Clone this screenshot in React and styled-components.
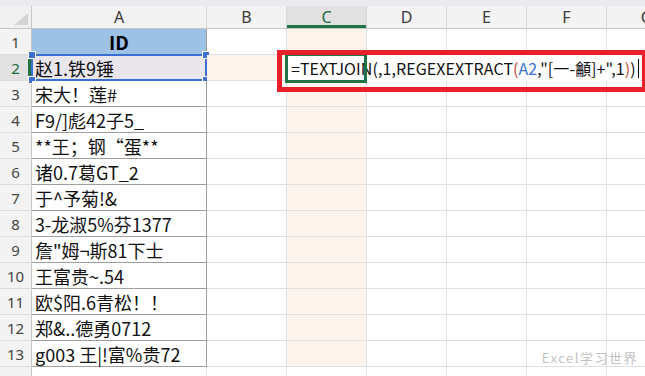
import styled, { createGlobalStyle } from 'styled-components';

const GlobalStyle = createGlobalStyle`
  html, body {
    margin: 0;
    padding: 0;
    background: #ffffff;
  }
  body {
    font-family: "Noto Sans CJK SC", "Noto Sans", sans-serif;
  }
`;

const COLS = [
  { key: 'A', width: 175 },
  { key: 'B', width: 80 },
  { key: 'C', width: 80, active: true },
  { key: 'D', width: 80 },
  { key: 'E', width: 80 },
  { key: 'F', width: 80 },
  { key: 'G', width: 80 },
];

const NAMES = [
  '赵1.铁9锤',
  '宋大！莲#',
  'F9/]彪42子5_',
  '**王；钢“蛋**',
  '诸0.7葛GT_2',
  '于^予菊!&',
  '3-龙淑5%芬1377',
  '詹"姆¬斯81下士',
  '王富贵~.54',
  '欧$阳.6青松！！',
  '郑&..德勇0712',
  'g003 王|!富%贵72',
];

const App = () => {
  const rows = [{ n: 1, header: true }, ...NAMES.map((t, i) => ({ n: i + 2, text: t })), { n: 14, blank: true }];

  return (
    <>
      <GlobalStyle />
      <Sheet>
        <TopBand />
        <HeaderRow>
          <Corner>
            <CornerTriangle />
          </Corner>
          {COLS.map((c) => (
            <ColHead key={c.key} $width={c.width} $active={c.active}>
              {c.key}
            </ColHead>
          ))}
        </HeaderRow>

        {rows.map((r) => (
          <Row key={r.n}>
            <RowHead $active={r.n === 2}>{r.blank ? '' : r.n}</RowHead>
            {COLS.map((c) => {
              if (c.key === 'A') {
                if (r.header) {
                  return (
                    <TitleCell key="A" $width={c.width}>ID</TitleCell>
                  );
                }
                if (r.blank) return <Cell key="A" $width={c.width} />;
                return (
                  <NameCell key="A" $width={c.width} $ref={r.n === 2}>
                    {r.text}
                    {r.n === 2 && (
                      <RefFrame>
                        <Handle $top $left />
                        <Handle $top />
                        <Handle $left />
                        <Handle />
                      </RefFrame>
                    )}
                  </NameCell>
                );
              }
              const tinted = (c.active && !r.blank) || (r.n === 2 && c.key === 'B');
              return (
                <Cell key={c.key} $width={c.width} $tinted={tinted}>
                  {c.active && r.n === 2 && (
                    <>
                      <Editor>
                        <Tok>=TEXTJOIN(,1,REGEXEXTRACT</Tok>
                        <Tok $color="#c0503c">(</Tok>
                        <Tok $color="#3c6fd1">A2</Tok>
                        <Tok>,"[一-龥]+",1</Tok>
                        <Tok $color="#c0503c">)</Tok>
                        <Tok>)</Tok>
                        <Caret />
                      </Editor>
                      <ActiveFrame />
                      <Callout />
                    </>
                  )}
                </Cell>
              );
            })}
          </Row>
        ))}

        <Watermark>Excel学习世界</Watermark>
      </Sheet>
    </>
  );
};

const Sheet = styled.div`
  position: relative;
  width: 645px;
  height: 376px;
  overflow: hidden;
  background: #ffffff;
`;

const TopBand = styled.div`
  height: 6px;
  background: #e9ebee;
`;

const HeaderRow = styled.div`
  display: flex;
  height: 23px;
  background: #f3f3f3;
  border-bottom: 1px solid #c6c6c6;
  box-sizing: border-box;
`;

const Corner = styled.div`
  position: relative;
  flex: 0 0 32px;
  box-sizing: border-box;
  border-right: 1px solid #c6c6c6;
  background: #f0f0f0;
`;

const CornerTriangle = styled.div`
  position: absolute;
  right: 3px;
  bottom: 3px;
  width: 0;
  height: 0;
  border-left: 14px solid transparent;
  border-bottom: 12px solid #d4d4d4;
`;

const ColHead = styled.div`
  flex: 0 0 ${(p) => p.$width}px;
  box-sizing: border-box;
  display: flex;
  align-items: center;
  justify-content: center;
  border-right: 1px solid #d9d9d9;
  font-family: "Noto Sans", "Open Sans", sans-serif;
  font-size: 16px;
  color: ${(p) => (p.$active ? '#1d6b43' : '#3a3a3a')};
  background: ${(p) => (p.$active ? '#e1e1e1' : 'transparent')};
  box-shadow: ${(p) => (p.$active ? 'inset 0 -3px 0 #217346' : 'none')};
`;

const Row = styled.div`
  display: flex;
  height: 26px;
`;

const RowHead = styled.div`
  flex: 0 0 32px;
  box-sizing: border-box;
  display: flex;
  align-items: center;
  justify-content: center;
  border-right: 1px solid #c6c6c6;
  border-bottom: 1px solid #dcdcdc;
  font-family: "Noto Sans", "Open Sans", sans-serif;
  font-size: 15px;
  color: ${(p) => (p.$active ? '#1d6b43' : '#444444')};
  background: ${(p) => (p.$active ? '#e1e1e1' : '#f3f3f3')};
  box-shadow: ${(p) => (p.$active ? 'inset -3px 0 0 #217346' : 'none')};
`;

const Cell = styled.div`
  position: relative;
  flex: 0 0 ${(p) => p.$width}px;
  box-sizing: border-box;
  border-right: 1px solid #e0e0e0;
  border-bottom: 1px solid #e0e0e0;
  background: ${(p) => (p.$tinted ? '#fdf4ee' : '#ffffff')};
`;

const NameCell = styled(Cell)`
  display: flex;
  align-items: center;
  padding-left: 3px;
  border-right: 1px solid #9e9e9e;
  border-bottom: 1px solid #9e9e9e;
  background: ${(p) => (p.$ref ? '#e9e6ec' : '#ffffff')};
  font-family: "Noto Sans CJK SC", "Noto Sans", sans-serif;
  font-size: 18px;
  color: #111111;
  white-space: nowrap;
`;

const TitleCell = styled(Cell)`
  display: flex;
  align-items: center;
  justify-content: center;
  border-right: 1px solid #9e9e9e;
  border-bottom: 1px solid #9e9e9e;
  background: #9cc3e6;
  font-family: "Noto Sans CJK SC", "Noto Sans", sans-serif;
  font-size: 19px;
  font-weight: 700;
  color: #000000;
`;

const RefFrame = styled.div`
  position: absolute;
  left: -1px;
  top: -1px;
  right: -1px;
  bottom: -1px;
  border: 2px solid #3c6fd1;
  pointer-events: none;
`;

const Handle = styled.span`
  position: absolute;
  width: 6px;
  height: 6px;
  background: #3c6fd1;
  border: 1px solid #ffffff;
  ${(p) => (p.$top ? 'top: -5px;' : 'bottom: -5px;')}
  ${(p) => (p.$left ? 'left: -5px;' : 'right: -5px;')}
`;

const Editor = styled.div`
  position: absolute;
  left: 0;
  top: 0;
  width: 353px;
  height: 26px;
  z-index: 2;
  display: flex;
  align-items: center;
  padding-left: 4px;
  box-sizing: border-box;
  background: #ffffff;
  font-family: "Noto Sans CJK SC", "Noto Sans", sans-serif;
  font-size: 16px;
  letter-spacing: 0.08px;
  color: #111111;
  white-space: nowrap;
`;

const Tok = styled.span`
  color: ${(p) => p.$color || '#111111'};
`;

const Caret = styled.span`
  display: inline-block;
  width: 1px;
  height: 19px;
  margin-left: 2px;
  background: #000000;
`;

const ActiveFrame = styled.div`
  position: absolute;
  left: -2px;
  top: -2px;
  width: 82px;
  height: 30px;
  box-sizing: border-box;
  border: 3px solid #217346;
  z-index: 3;
`;

const Callout = styled.div`
  position: absolute;
  left: -10px;
  top: -5px;
  width: 370px;
  height: 42px;
  box-sizing: border-box;
  border: 5px solid #e8202a;
  z-index: 4;
`;

const Watermark = styled.div`
  position: absolute;
  right: 7px;
  bottom: 9px;
  font-family: "Noto Sans CJK SC", "Noto Sans", sans-serif;
  font-size: 13px;
  letter-spacing: 1.5px;
  color: #c2c2c2;
`;

export default App;
